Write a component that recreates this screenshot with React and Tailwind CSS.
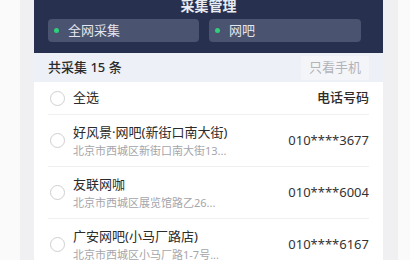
import React from "react";

const items = [
  { name: "好风景·网吧(新街口南大街)", addr: "北京市西城区新街口南大街13...", phone: "010****3677" },
  { name: "友联网咖", addr: "北京市西城区展览馆路乙26...", phone: "010****6004" },
  { name: "广安网吧(小马厂路店)", addr: "北京市西城区小马厂路1-7号...", phone: "010****6167" },
];

function Circle() {
  return <div className="w-[15px] h-[15px] rounded-full border border-[#cfcfd4] bg-white shrink-0" />;
}

export default function App() {
  return (
    <div
      className="w-[410px] h-[260px] overflow-hidden bg-[#fafafa] pl-[20px]"
      style={{ fontFamily: '"Noto Sans", "Noto Sans CJK SC", sans-serif' }}
    >
      <div className="w-[378px] h-full bg-[#f0f0f2] px-[14px]">
        <div className="w-[349px] h-full bg-white flex flex-col">
          {/* header */}
          <div className="bg-[#27314f] h-[53px] shrink-0 flex flex-col px-[14px]">
            <div className="-mt-[2px] h-[15px] leading-[15px] text-center text-[14px] font-bold text-[#e9ecf3]">
              采集管理
            </div>
            <div className="mt-[6px] flex gap-[10px]">
              <div className="w-[151px] h-[23px] rounded-[4px] bg-[#4a5370] flex items-center pl-[6px]">
                <span className="w-[5px] h-[5px] rounded-full bg-[#2fcf7c]" />
                <span className="ml-[9px] text-[13px] text-[#e3e6ee] leading-none">全网采集</span>
              </div>
              <div className="w-[152px] h-[23px] rounded-[4px] bg-[#4a5370] flex items-center pl-[6px]">
                <span className="w-[5px] h-[5px] rounded-full bg-[#2fcf7c]" />
                <span className="ml-[9px] text-[13px] text-[#e3e6ee] leading-none">网吧</span>
              </div>
            </div>
          </div>
          {/* summary */}
          <div className="h-[29px] shrink-0 bg-[#eef0f7] flex items-center justify-between pl-[14px] pr-[14px]">
            <span className="text-[13px] font-medium text-[#2b2b2b]">共采集 15 条</span>
            <span className="h-[24px] px-[8px] flex items-center bg-[#f4f5f9] text-[13px] text-[#b3b3b8] rounded-[2px]">
              只看手机
            </span>
          </div>
          {/* list header */}
          <div className="mx-[14px] h-[33px] shrink-0 flex items-center justify-between border-b border-[#efeff2]">
            <div className="flex items-center">
              <div className="ml-[2px]"><Circle /></div>
              <span className="ml-[8px] text-[13px] text-[#2b2b2b]">全选</span>
            </div>
            <span className="text-[13px] font-medium text-[#2b2b2b]">电话号码</span>
          </div>
          {items.map((it) => (
            <div
              key={it.phone}
              className="mx-[14px] h-[52px] shrink-0 flex items-center justify-between border-b border-[#efeff2]"
            >
              <div className="flex items-center">
                <div className="ml-[2px]"><Circle /></div>
                <div className="ml-[8px] flex flex-col">
                  <span className="h-[20px] leading-[20px] text-[13px] text-[#2b2b2b]">{it.name}</span>
                  <span className="h-[17px] leading-[17px] text-[11px] text-[#a5a5aa]">{it.addr}</span>
                </div>
              </div>
              <span className="text-[13px] text-[#333333]">{it.phone}</span>
            </div>
          ))}
        </div>
      </div>
    </div>
  );
}
